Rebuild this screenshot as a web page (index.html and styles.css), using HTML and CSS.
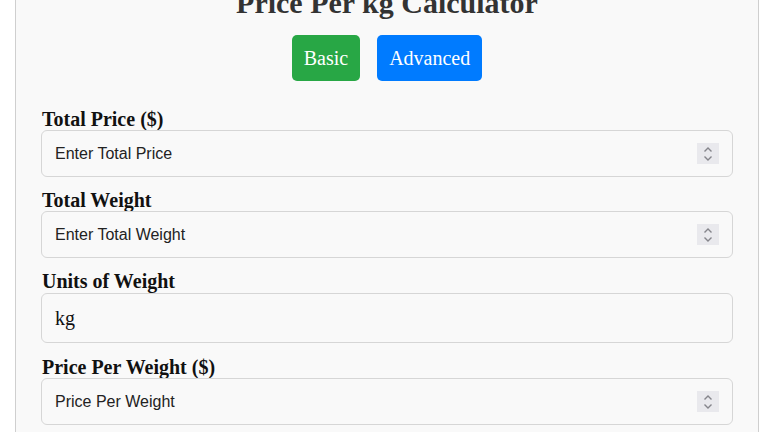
FILE: index.html
```html
<!DOCTYPE html>
<html lang="en">
<head>
<meta charset="utf-8">
<title>Price Per kg Calculator</title>
<link rel="stylesheet" href="styles.css">
</head>
<body>
<div class="calc">
  <h1 class="calc-title">Price Per kg Calculator</h1>
  <div class="mode-tabs">
    <button class="mode-btn mode-basic">Basic</button>
    <button class="mode-btn mode-advanced">Advanced</button>
  </div>
  <div class="field">
    <label class="field-label">Total Price ($)</label>
    <div class="num-input">
      <span class="placeholder">Enter Total Price</span>
      <span class="spinner"><svg width="10" height="16" viewBox="0 0 10 16"><path d="M1.5 5.5 L5 2 L8.5 5.5 M1.5 10.5 L5 14 L8.5 10.5" fill="none" stroke="#85858b" stroke-width="1.4"/></svg></span>
    </div>
  </div>
  <div class="field">
    <label class="field-label">Total Weight</label>
    <div class="num-input">
      <span class="placeholder">Enter Total Weight</span>
      <span class="spinner"><svg width="10" height="16" viewBox="0 0 10 16"><path d="M1.5 5.5 L5 2 L8.5 5.5 M1.5 10.5 L5 14 L8.5 10.5" fill="none" stroke="#85858b" stroke-width="1.4"/></svg></span>
    </div>
  </div>
  <div class="field">
    <label class="field-label">Units of Weight</label>
    <div class="unit-select">kg</div>
  </div>
  <div class="field">
    <label class="field-label">Price Per Weight ($)</label>
    <div class="num-input">
      <span class="placeholder">Price Per Weight</span>
      <span class="spinner"><svg width="10" height="16" viewBox="0 0 10 16"><path d="M1.5 5.5 L5 2 L8.5 5.5 M1.5 10.5 L5 14 L8.5 10.5" fill="none" stroke="#85858b" stroke-width="1.4"/></svg></span>
    </div>
  </div>
</div>
</body>
</html>
```
FILE: styles.css
```css
html, body {
  margin: 0;
  padding: 0;
  background: #ffffff;
  overflow: hidden;
}

body {
  font-family: "Liberation Serif", "Times New Roman", serif;
}

.calc {
  box-sizing: border-box;
  width: 744px;
  margin: -40px 0 0 15px;
  padding: 25px 25px 40px;
  background: #f9f9f9;
  border: 1px solid #cfcfcf;
  border-radius: 6px;
}

.calc-title {
  margin: 0;
  font-size: 30px;
  line-height: 34px;
  font-weight: bold;
  text-align: center;
  color: #333333;
}

.mode-tabs {
  display: flex;
  justify-content: center;
  gap: 17px;
  margin-top: 15px;
}

.mode-btn {
  font-family: "Liberation Serif", "Times New Roman", serif;
  font-size: 20px;
  line-height: 24px;
  padding: 11px 12px;
  border: none;
  border-radius: 5px;
  color: #ffffff;
}

.mode-basic {
  background: #28a745;
}

.mode-advanced {
  background: #007bff;
}

.field {
  display: flex;
  flex-direction: column;
}

.mode-tabs + .field {
  margin-top: 27px;
}

.field-label {
  display: block;
  font-size: 20px;
  line-height: 22px;
  font-weight: bold;
  color: #111111;
  padding-left: 1px;
}

.num-input {
  box-sizing: border-box;
  height: 47px;
  margin-bottom: 12px;
  display: flex;
  align-items: center;
  justify-content: space-between;
  padding: 0 13px 0 13px;
  border: 1px solid #d6d6d6;
  border-radius: 6px;
  background: #f9f9f9;
}

.placeholder {
  font-family: "Liberation Sans", Arial, sans-serif;
  font-size: 16px;
  color: #222222;
}

.spinner {
  width: 22px;
  height: 21px;
  display: flex;
  align-items: center;
  justify-content: center;
  background: #e9e9ed;
}

.unit-select {
  box-sizing: border-box;
  height: 50px;
  margin: 1px 0 13px;
  display: flex;
  align-items: center;
  padding: 0 13px;
  border: 1px solid #d6d6d6;
  border-radius: 6px;
  background: #f9f9f9;
  font-size: 20px;
  color: #111111;
}
```
